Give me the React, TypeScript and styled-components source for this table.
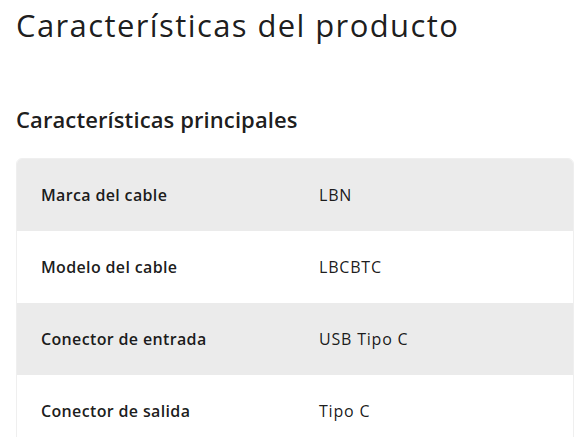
import styled, { createGlobalStyle } from "styled-components";

const GlobalStyle = createGlobalStyle`
  body {
    margin: 0;
    background: #fff;
    font-family: "Open Sans", "Lato", sans-serif;
    color: rgba(0, 0, 0, 0.9);
  }
`;

const Page = styled.div`
  padding: 5px 8px 0 16px;
`;

const Title = styled.h1`
  margin: 0;
  font-size: 31px;
  font-weight: 400;
  line-height: 40px;
  letter-spacing: 1.4px;
`;

const Subtitle = styled.h2`
  margin: 60px 0 0;
  font-size: 22px;
  font-weight: 600;
  line-height: 28px;
  letter-spacing: 0.1px;
`;

const Table = styled.div`
  margin-top: 25px;
  border: 1px solid #efefef;
  border-radius: 6px;
  overflow: hidden;
`;

const Row = styled.div<{ $shaded: boolean }>`
  display: grid;
  grid-template-columns: 278px 1fr;
  align-items: center;
  height: 72px;
  padding-left: 24px;
  padding-bottom: 1px;
  box-sizing: border-box;
  background: ${(p) => (p.$shaded ? "#ebebeb" : "#fff")};
  font-size: 16px;
`;

const Label = styled.span`
  font-weight: 600;
  letter-spacing: 0.35px;
`;

const Value = styled.span`
  font-weight: 400;
  letter-spacing: 0.8px;
`;

const rows = [
  ["Marca del cable", "LBN"],
  ["Modelo del cable", "LBCBTC"],
  ["Conector de entrada", "USB Tipo C"],
  ["Conector de salida", "Tipo C"],
];

export default function App() {
  return (
    <Page>
      <GlobalStyle />
      <Title>Características del producto</Title>
      <Subtitle>Características principales</Subtitle>
      <Table>
        {rows.map(([label, value], i) => (
          <Row key={label} $shaded={i % 2 === 0}>
            <Label>{label}</Label>
            <Value>{value}</Value>
          </Row>
        ))}
      </Table>
    </Page>
  );
}
